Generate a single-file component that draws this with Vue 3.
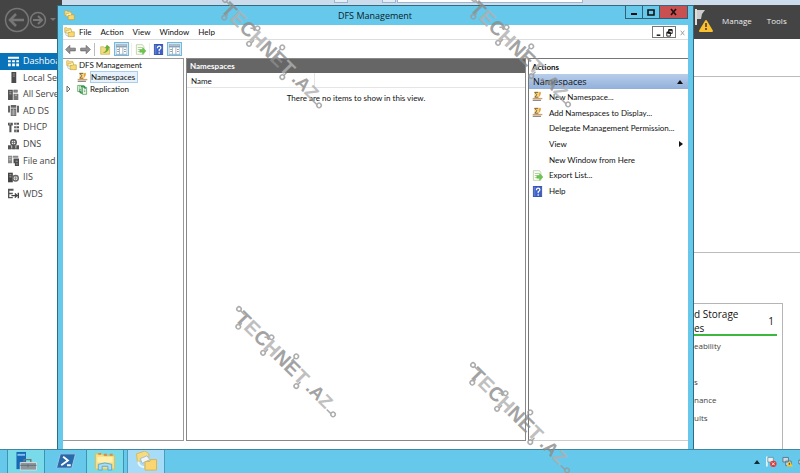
<script setup>
const art = {
  folders: '<path d="M1 1h3l1 1h5v6H1z" fill="#f5dc83" stroke="#c0a040" stroke-width=".8"/><path d="M3 5h4l1-1h3v5H3z" fill="#fff0b5" stroke="#c0a040" stroke-width=".7"/><path d="M6 8h3l1-1h5v7H6z" fill="#f7d96c" stroke="#b3923a" stroke-width=".8"/><path d="M2 9q0 4 4 4" fill="none" stroke="#8db7d6"/>',
  names: '<path d="M3 1h7v9H4z" fill="#f7d67c"/><path d="M10 2q3-2 3 1t-3 6" fill="#e8a23a"/><path d="M9 2H4l3 3.500L4 9h5" fill="none" stroke="#6d5a46" stroke-width="1.300"/><path d="M1 10h14v2H1z" fill="#d0a068"/><path d="M1 13.500h12" stroke="#77736e" stroke-width="1.600"/>',
  replication: '<path d="M1 2h6v9H1z" fill="#eef7ea" stroke="#3b9148"/><path d="M8 5h6v10H8z" fill="#eef7ea" stroke="#3b9148"/><path d="M3 4h2M3 6h2M3 8h3M10 9h2M10 11h2" stroke="#478e55"/><path d="M6 4q5-3 6 3M4 9q0 5 4 4" fill="none" stroke="#249243" stroke-width="2"/>',
  back: '<path d="M1 8l6-6v4h8v4H7v4z" fill="#929292" stroke="#5d5d5d"/>',
  forward: '<path d="M15 8L9 2v4H1v4h8v4z" fill="#929292" stroke="#5d5d5d"/>',
  up: '<path d="M1 4h4l2 1h7v10H1z" fill="#f3dc7f" stroke="#c9b04f"/><path d="M5 12q4-1 4-6H7l3-5 5 4h-2q0 7-8 8z" fill="#65b03b"/>',
  panel: '<path d="M0 1h16v14H0z" fill="#fff" stroke="#8093a5"/><path d="M0 2h16v3H0z" fill="#8ba3b8"/><path d="M5 5v10M10 5v10" stroke="#8293a3"/><path d="M2 8h2M2 11h2M12 8h2M12 11h2" stroke="#6c7d8e" stroke-width="1.500"/>',
  export: '<path d="M2 1h9l2 3v11H2z" fill="#fcfff4" stroke="#a9c48f"/><path d="M4 5h6M4 8h3M4 11h3" stroke="#9ab08e"/><path d="M7 8h4V5l5 5-5 5v-3H7z" fill="#6cc84c" stroke="#4aa83a" stroke-width=".6"/>',
  help: '<path d="M2 0h12v16H2z" fill="#3c5fc8" stroke="#243d91"/><path d="M4 1v14" stroke="#7997dd"/><path d="M6.500 6q0-3 2.500-3t2.500 2.500q0 1.500-2.500 3v2M9 12v2" fill="none" stroke="#fff" stroke-width="1.800"/>',
  dash: '<path d="M0 1h16v3H0zM0 6h4v3H0zM6 6h4v3H6zM12 6h4v3h-4zM0 11h4v4H0zM6 11h4v4H6zM12 11h4v4h-4z" fill="#fff"/>',
  server: '<path d="M5 0h7v16H5z" fill="#4b4b4b"/><path d="M7 3h3M7 6h3" stroke="#bbb"/>',
  servers: '<path d="M0 1h7v15H0zM8 1h6v4H8z" fill="#555"/><path d="M8 7h7v9H8z" fill="#777"/><path d="M2 4h3M2 7h3M10 9h3M9 3h4" stroke="#ddd"/>',
  ad: '<path d="M0 1h3v10H0zM4 0h8v4H4zM13 1h3v10h-3zM4 5h8v11H4z" fill="#666"/><path d="M6 7v8M8 6v9M10 7v8" stroke="#ccc"/>',
  dhcp: '<path d="M0 1h7v4H5v10H2V5H0zM9 1h7v3H9zM9 6h7v3H9zM9 11h7v4H9z" fill="#555"/><path d="M3 1v3M12 1v14" stroke="#ddd"/>',
  dns: '<path d="M0 9h5v6H0zM6 9h5v6H6zM12 9h4v6h-4z" fill="#555"/><circle cx="8" cy="5" r="4" fill="#eee" stroke="#555" stroke-width="2"/><path d="M4 5h8M8 1v8M0 14h16" stroke="#555"/>',
  files: '<path d="M0 1h6v11H0zM7 1h8v3H7z" fill="#888"/><path d="M8 5h8v11h-6v-4H8z" fill="#4d4d4d"/><path d="M1 4h4M1 7h4M11 9h3M12 13h2" stroke="#ddd"/>',
  iis: '<path d="M0 1h7v14H0z" fill="#444"/><path d="M2 4h3M2 7h3" stroke="#ddd"/><circle cx="11" cy="9" r="4" fill="#eee" stroke="#666" stroke-width="2"/><path d="M8 9h6M11 6v6" stroke="#777"/>',
  wds: '<path d="M0 1h8v3H2v3h5v2H2v4h5v2H0z" fill="#555"/><path d="M5 11h8M10 8l3 3-3 3M15 7v8" fill="none" stroke="#444" stroke-width="2"/>'
}
const side = [['dash', 'Dashboard'], ['server', 'Local Server'], ['servers', 'All Servers'], ['ad', 'AD DS'], ['dhcp', 'DHCP'], ['dns', 'DNS'], ['files', 'File and S'], ['iis', 'IIS'], ['wds', 'WDS']]
const actions = [['names', 'New Namespace...'], ['names', 'Add Namespaces to Display...'], ['', 'Delegate Management Permission...'], ['', 'View'], ['', 'New Window from Here'], ['export', 'Export List...'], ['help', 'Help']]
const marks = ['m1', 'm2', 'm3', 'm4']
</script>

<template>
  <div class="desktop">
    <section class="manager">
      <div class="behind"><i></i><i></i><i></i></div>
      <header class="mhead">
        <svg class="navart" viewBox="0 0 60 40" fill="none" stroke="#777">
          <circle cx="17" cy="20" r="11.5" stroke-width="1.5" /><path d="M24 20H10M16 14l-6 6 6 6" stroke-width="2.5" />
          <circle cx="38" cy="20" r="7.5" stroke-width="1.5" /><path d="M33 20h9M38 16l4 4-4 4" stroke-width="2" />
          <path d="M50 18h6l-3 3z" fill="#777" stroke="none" />
        </svg>
        <nav class="mnav">
          <svg class="flag" viewBox="0 0 20 24"><path d="M2 0v16" stroke="#ddd" stroke-width="2" /><path d="M3 1h8L8 5l-1 5H3z" fill="#ccc" /><path d="M12 12l6 10H6z" fill="#fbc02d" stroke="#fbc02d" stroke-width="2" stroke-linejoin="round" /><path d="M12 14v4M12 19v2" stroke="#433" stroke-width="1.5" /></svg>
          <button>Manage</button><button>Tools</button>
        </nav>
      </header>
      <div class="mbody">
        <ul class="side">
          <li v-for="(s, i) in side" :key="s[1]"><a href="#" :class="{ on: i === 0 }"><svg viewBox="0 0 16 16" v-html="art[s[0]]"></svg>{{ s[1] }}</a></li>
        </ul>
        <div class="dash">
          <div class="band"></div>
          <div class="tile">
            <h2><span>d Storage<br>es</span><b>1</b></h2>
            <ul><li>eability</li><li></li><li>s</li><li>nance</li><li>ults</li></ul>
          </div>
        </div>
      </div>
    </section>

    <main class="window">
      <header class="title">
        <svg class="ic" viewBox="0 0 16 16" v-html="art.folders"></svg>
        <h1>DFS Management</h1>
        <div class="ctl">
          <button aria-label="Minimize"><svg viewBox="0 0 10 10"><path d="M2 7h6" stroke="#111" stroke-width="2" /></svg></button>
          <button aria-label="Maximize"><svg viewBox="0 0 10 10"><path d="M2 3h6v5H2z" fill="none" stroke="#111" stroke-width="1.6" /></svg></button>
          <button class="close" aria-label="Close"><svg viewBox="0 0 10 10"><path d="M2 2l5 6M7 2L2 8" stroke="#211" stroke-width="1.6" /></svg></button>
        </div>
      </header>
      <div class="inner">
        <nav class="menu">
          <svg class="ic" viewBox="0 0 16 16" v-html="art.folders"></svg>
          <button>File</button><button>Action</button><button>View</button><button>Window</button><button>Help</button>
          <div class="mdi">
            <button aria-label="Minimize view"><svg viewBox="0 0 10 10"><path d="M3 8h4" stroke="#111" stroke-width="1.6" /></svg></button>
            <button aria-label="Restore view"><svg viewBox="0 0 10 10"><path d="M4 2h4v4H4zM2 5h4v4H2z" fill="#fff" stroke="#111" /><path d="M4 2h4M2 5h4" stroke="#111" stroke-width="2" /></svg></button>
            <button class="off" aria-label="Close view"><svg viewBox="0 0 10 10"><path d="M3 3l4 5M7 3L3 8" stroke="#999" /></svg></button>
          </div>
        </nav>
        <div class="tools">
          <button aria-label="Back"><svg viewBox="0 0 16 16" v-html="art.back"></svg></button>
          <button aria-label="Forward"><svg viewBox="0 0 16 16" v-html="art.forward"></svg></button>
          <hr>
          <button aria-label="Up one level"><svg viewBox="0 0 16 16" v-html="art.up"></svg></button>
          <button class="on" aria-label="Console tree"><svg viewBox="0 0 16 16" v-html="art.panel"></svg></button>
          <hr class="soft">
          <button aria-label="Export"><svg viewBox="0 0 16 16" v-html="art.export"></svg></button>
          <hr class="soft">
          <button aria-label="Help topics"><svg viewBox="0 0 16 16" v-html="art.help"></svg></button>
          <button class="on" aria-label="Action pane"><svg viewBox="0 0 16 16" v-html="art.panel"></svg></button>
        </div>
        <div class="panes">
          <ul class="tree">
            <li><svg class="ic" viewBox="0 0 16 16" v-html="art.folders"></svg><span>DFS Management</span></li>
            <li class="kid"><svg class="ic" viewBox="0 0 16 16" v-html="art.names"></svg><span class="sel">Namespaces</span></li>
            <li class="kid"><svg class="exp" viewBox="0 0 6 8"><path d="M1 1l3 3-3 3z" fill="#fff" stroke="#666" /></svg><svg class="ic" viewBox="0 0 16 16" v-html="art.replication"></svg><span>Replication</span></li>
          </ul>
          <section class="list">
            <h2>Namespaces</h2>
            <table>
              <thead><tr><th>Name</th><th></th></tr></thead>
              <tbody><tr><td colspan="2">There are no items to show in this view.</td></tr></tbody>
            </table>
          </section>
          <aside class="acts">
            <h2>Actions</h2>
            <h3>Namespaces<svg viewBox="0 0 8 6"><path d="M1 5l3-4 3 4z" fill="#111" /></svg></h3>
            <ul>
              <li v-for="a in actions" :key="a[1]"><button><svg class="ic" viewBox="0 0 16 16" v-html="art[a[0]]"></svg><span>{{ a[1] }}</span><svg v-if="a[1] === 'View'" class="more" viewBox="0 0 6 8"><path d="M1 1l4 3-4 3z" fill="#111" /></svg></button></li>
            </ul>
          </aside>
        </div>
        <footer class="status"></footer>
      </div>
    </main>

    <footer class="taskbar">
      <button class="app run" aria-label="Server Manager"><svg viewBox="0 0 24 22"><path d="M2 1h10v18H2z" fill="#1769b5" /><path d="M3 4h8" stroke="#7fc1f2" stroke-width="2" /><path d="M10 12V9h7v3" fill="none" stroke="#6c7478" stroke-width="1.5" /><path d="M6 12h17v8H6z" fill="#8b979d" stroke="#d5dde0" /><path d="M6 15h17M14 14v3" stroke="#5f6c72" /></svg></button>
      <button class="app" aria-label="PowerShell"><svg viewBox="0 0 24 22"><path d="M6 3h16l-4 15H2z" fill="#2a6aaa" stroke="#9ac8ea" /><path d="M9 6l5 4-7 5M13 15h4" fill="none" stroke="#fff" stroke-width="2" /></svg></button>
      <button class="app run" aria-label="File Explorer"><svg viewBox="0 0 24 22"><path d="M2 3h7l2 2h11v14H2z" fill="#f6df86" stroke="#e0bd58" /><path d="M4 6h16v6H4z" fill="#fff0ac" /><path d="M5 3h3M11 4h3M17 4h3" stroke="#d98a3f" stroke-width="2" /><path d="M5 20v-6q7-3 14 0v6h-4v-4H9v4z" fill="#a7dcf4" stroke="#5ba9d0" /></svg></button>
      <button class="app active" aria-label="DFS Management"><svg viewBox="0 0 24 22"><path d="M2 3l9-3 4 3v6L3 11z" fill="#f5dc83" stroke="#d8b95a" /><path d="M6 8l7-3 3 4-8 4z" fill="#eef5f8" stroke="#9fbccb" /><path d="M4 11q0 5 6 6" fill="none" stroke="#eaf6fc" stroke-width="2" /><path d="M11 11h5l1-2h6v11H11z" fill="#f9d672" stroke="#dcb148" /></svg></button>
      <div class="tray">
        <svg viewBox="0 0 8 8"><path d="M1 6l3-4 3 4z" fill="#132c38" /></svg>
        <svg class="big" viewBox="0 0 12 12"><path d="M1 0v11" stroke="#fff" stroke-width="1.5" /><path d="M2 1h6v5H2z" fill="#e7f1f5" stroke="#55717f" stroke-width=".6" /><circle cx="8" cy="8" r="3.5" fill="#d83b3b" /><path d="M6.500 6.500l3 3M9.500 6.500l-3 3" stroke="#fff" /></svg>
        <svg class="big" viewBox="0 0 12 12"><path d="M1 1h6v5H1zM4 5h6v5H4z" fill="#c8dbe4" stroke="#5c7582" /><path d="M8 5l4 6H5z" fill="#f3c92d" /><path d="M8 7v2" stroke="#333" /></svg>
        <svg class="big cut" viewBox="0 0 12 12"><path d="M1 4h3l3-3v10L4 8H1z" fill="#f2f8fa" stroke="#506c79" /></svg>
      </div>
    </footer>

    <svg v-for="m in marks" :key="m" class="mark" :class="m" viewBox="0 0 120 120">
      <g transform="translate(7 14) rotate(45)">
        <text x="4" y="11">T<tspan class="lite">E</tspan>C<tspan class="lite">H</tspan>NE<tspan class="lite">T</tspan></text>
        <text class="small" x="103" y="10">.A<tspan class="lite">Z</tspan></text>
        <g fill="none" stroke="#999" stroke-width="1.500">
          <circle cx="0" cy="0" r="2.200" /><path d="M2 0h6" /><circle cx="12" cy="13" r="2.200" /><path d="M12 11V8" /><circle cx="43" cy="-3" r="2.200" /><path d="M41-1l-3 3" /><circle cx="48" cy="14" r="2.200" /><path d="M49 12V8" /><circle cx="74" cy="-7" r="2.200" /><path d="M74-5v5" /><circle cx="95" cy="14" r="2.200" /><path d="M95 12V8" /><circle cx="141" cy="8" r="2.200" /><path d="M139 9h-6" />
        </g>
      </g>
    </svg>
  </div>
</template>

<style>
body { margin: 0; overflow: hidden; }
</style>

<style scoped>
* { box-sizing: border-box; }
h1, h2, h3, ul { margin: 0; padding: 0; font-weight: 400; list-style: none; }
button { border: 0; background: none; padding: 0; font: inherit; color: inherit; display: flex; align-items: center; justify-content: center; }
a { color: inherit; text-decoration: none; }
svg { display: block; flex: none; }
.ic { width: 11px; height: 11px; }
.desktop { position: relative; height: 100vh; overflow: hidden; display: flex; flex-direction: column; font-family: "Open Sans", "Noto Sans", sans-serif; font-size: 8px; line-height: 12px; color: #111; background: #fff; }
.manager { flex: 1; min-height: 0; display: flex; flex-direction: column; }
.behind { height: 5px; margin-left: 62px; background: #cbdcec; display: flex; gap: 34px; padding-left: 272px; flex: none; }
.behind i { width: 14px; height: 3px; background: #e4edf6; border: 1px solid #9cb6cf; border-top: 0; }
.behind i:last-child { width: 186px; background: #fff; margin-left: -33px; }
.mhead { margin-top: -5px; height: 39px; background: linear-gradient(#444, #444) 0 0 / 62px 100% no-repeat, linear-gradient(transparent 5px, #444 5px); display: flex; justify-content: space-between; flex: none; }
.navart { width: 60px; height: 40px; }
.mnav { width: 106px; display: flex; align-items: center; gap: 15px; padding-top: 2px; color: #eee; font-size: 8px; }
.mnav button { white-space: nowrap; }
.flag { width: 20px; height: 24px; margin: 0 -7px 0 0; }
.mbody { flex: 1; min-height: 0; display: flex; justify-content: space-between; }
.side { width: 62px; height: 163px; padding-top: 14px; display: grid; grid-auto-rows: 1fr; font-size: 9px; color: #444; }
.side a { height: 100%; display: flex; align-items: center; gap: 4px; padding-left: 8px; white-space: nowrap; }
.side svg { width: 11px; height: 11px; }
.side .on { background: #0873b9; color: #fff; }
.dash { width: 106px; display: flex; flex-direction: column; }
.band { height: 177px; margin-top: 37px; border: solid #bbb; border-width: 1px 0; }
.tile { flex: 1; margin: 50px 17px 0 0; border: solid #b5b5b5; border-width: 1px 1px 0 0; padding-right: 5px; }
.tile h2 { height: 32px; border-bottom: 2px solid #3cb83f; display: flex; justify-content: space-between; padding: 3px 3px 0 0; font-size: 10px; line-height: 14px; }
.tile b { font-weight: 400; padding-top: 7px; }
.tile ul { font-size: 8px; line-height: 18px; padding-top: 1px; color: #444; }
.tile li { height: 18px; }

.window { position: absolute; left: 57px; right: 106px; top: 5px; bottom: 24px; background: #66c9eb; border: solid #316b82; border-width: 1px 1px 0; padding: 0 5px; display: flex; flex-direction: column; font-family: Lato, "Open Sans", sans-serif; }
.title { height: 19px; display: flex; align-items: center; justify-content: space-between; flex: none; padding-left: 1px; color: #0c2029; }
.title h1 { flex: 1; text-align: center; font-family: "Open Sans", sans-serif; font-size: 9px; padding-left: 50px; }
.ctl { display: flex; align-self: flex-start; border: solid #315f73; border-width: 0 1px 1px; height: 13px; }
.ctl button { width: 17px; border-right: 1px solid #315f73; }
.ctl .close { width: 27px; border: 0; background: #c85050; }
.ctl svg { width: 10px; height: 10px; }
.inner { flex: 1; min-height: 0; background: #fff; display: flex; flex-direction: column; }
.menu { height: 15px; border-bottom: 1px solid #ddd; display: flex; align-items: center; gap: 9px; padding-left: 1px; flex: none; }
.menu .ic { margin-right: -5px; }
.mdi { margin-left: auto; display: flex; align-self: stretch; }
.mdi button { width: 12px; height: 12px; margin-top: 1px; border: 1px solid #777; }
.mdi button + button { border-left: 0; }
.mdi .off { border: 0; }
.mdi svg { width: 9px; height: 9px; }
.tools { height: 18px; display: flex; align-items: center; gap: 2px; padding-left: 1px; flex: none; }
.tools button { width: 13px; height: 13px; }
.tools svg { width: 11px; height: 11px; }
.tools .on { background: #cce8f7; border: 1px solid #76b8dc; width: 15px; height: 14px; }
.tools hr { width: 1px; height: 13px; margin: 0 2px 0 0; border: 0; background: #bbb; }
.tools .soft { background: #eee; margin: 0; }
.panes { flex: 1; min-height: 0; display: flex; gap: 2px; }
.tree { width: 121px; border: 1px solid #999; border-left: 0; padding: 0 0 0 3px; flex: none; }
.tree li { height: 12px; display: flex; align-items: center; gap: 2px; white-space: nowrap; }
.tree .kid { padding-left: 11px; }
.tree .sel { background: #e6f1fb; border: 1px solid #a9cdea; line-height: 10px; padding-right: 2px; }
.exp { width: 6px; height: 8px; margin: 0 3px 0 -11px; }
.list { flex: 1; min-width: 0; border: 1px solid #888; }
.list h2 { height: 14px; background: #666; color: #fff; font-size: 8px; font-weight: 700; padding-left: 3px; line-height: 14px; }
table { width: 100%; border-collapse: collapse; }
th { font-weight: 400; text-align: left; height: 14px; padding: 2px 4px 0; border: solid #e5e5e5; border-width: 0 1px 1px 0; width: 127px; }
th:last-child { width: auto; border-right: 0; }
td { text-align: center; height: 20px; padding: 0; }
.acts { width: 160px; border: solid #777; border-width: 1px 0 1px 1px; border-bottom-color: #ccc; flex: none; }
.acts h2 { font-size: 8px; font-weight: 700; height: 15px; line-height: 16px; padding-left: 3px; }
.acts h3 { height: 15px; background: linear-gradient(#b8cdeb, #91b0da); display: flex; align-items: center; justify-content: space-between; padding: 0 4px; font-family: "Open Sans", sans-serif; font-size: 9px; }
.acts h3 svg { width: 8px; height: 6px; }
.acts ul { height: 110px; display: grid; grid-auto-rows: 1fr; }
.acts button { width: 100%; height: 100%; justify-content: flex-start; gap: 6px; padding: 0 4px 0 3px; white-space: nowrap; }
.more { width: 6px; height: 8px; margin-left: auto; }
.status { height: 8px; flex: none; }

.taskbar { height: 24px; background: #66c9eb; border-top: 1px solid #3f87a3; display: flex; flex: none; padding-left: 7px; }
.app { width: 38px; height: 23px; border: solid transparent; border-width: 0 1px; }
.app svg { width: 24px; height: 21px; }
.app.run { background: #79dbe9; border-color: #3f93b2; }
.app:nth-child(2) { width: 41px; }
.app.active { margin-left: 3px; background: #a6dcf8; border-color: #4c9dbd; }
.tray { margin-left: auto; display: flex; align-items: center; gap: 5px; overflow: hidden; }
.tray svg { width: 8px; height: 8px; }
.tray .big { width: 11px; height: 12px; }
.tray .cut { margin-right: -9px; }

.mark { position: absolute; width: 120px; height: 120px; opacity: .8; pointer-events: none; overflow: visible; }
.mark text { font: 700 20px "Liberation Sans", sans-serif; fill: #8c8c8c; }
.mark .lite { fill: #b0b0b0; }
.mark .small { font-size: 18px; }
.m1 { left: 218px; top: -14px; }
.m2 { left: 467px; top: -15px; }
.m3 { left: 232px; top: 295px; }
.m4 { left: 466px; top: 351px; }
</style>
